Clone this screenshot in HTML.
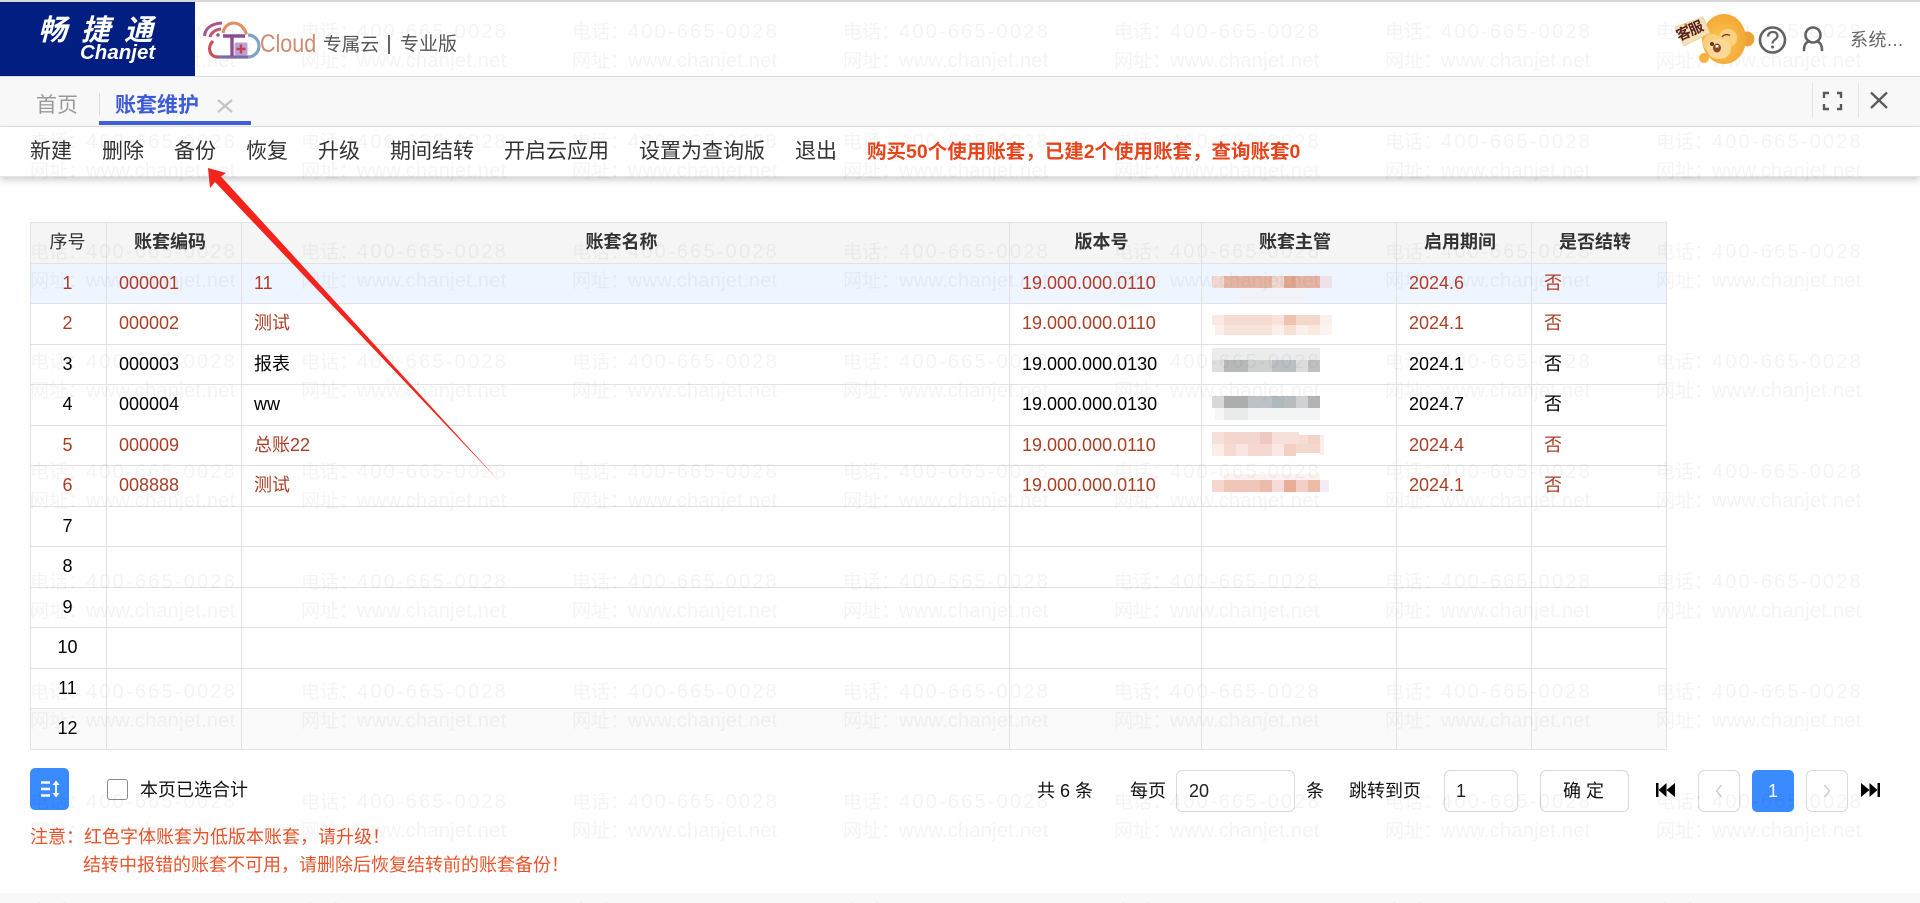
<!DOCTYPE html>
<html lang="zh">
<head>
<meta charset="utf-8">
<title>账套维护</title>
<style>
html,body{margin:0;padding:0;width:1920px;height:903px;overflow:hidden;background:#fff}
body{position:relative;font-family:"Liberation Sans","Noto Sans CJK SC",sans-serif;font-size:18px;color:#000}
.a{position:absolute}
.t{position:absolute;white-space:nowrap;line-height:24px}
#top{left:0;top:0;width:1920px;height:2px;background:#d9d9d9}
#hdline{left:0;top:76px;width:1920px;height:1px;background:#dcdcdc}
#tabs{left:0;top:77px;width:1920px;height:49px;background:#f8f8f9;border-bottom:1px solid #e6e6e6}
#bar{left:0;top:127px;width:1920px;height:49px;background:#fff;box-shadow:0 3px 7px rgba(0,0,0,.2);border-bottom:1px solid #e4e4e4}
#foot{left:0;top:893px;width:1920px;height:10px;background:#f8f8f8}
#logo{left:0;top:2px;width:195px;height:74px;background:#011e80;z-index:5;overflow:hidden}
.tb{font-size:21px;color:#333;top:140px}
table{position:absolute;left:30px;top:222px;border-collapse:separate;border-spacing:0;table-layout:fixed;width:1637px;border-left:1px solid #e2e2e2;border-top:1px solid #e2e2e2}
th,td{padding:0 0 2px 0;box-sizing:border-box;border-right:1px solid #e2e2e2;border-bottom:1px solid #e2e2e2;line-height:20px;font-size:18px;text-align:left;overflow:hidden;white-space:nowrap}
th{background:#f5f5f5;color:#333;font-weight:bold;text-align:center;padding-right:8px}
th.n{font-weight:normal;padding-right:2px}
td.n{text-align:center;padding-right:2px}
td.p{padding-left:12px}
td.v{padding-left:12px}
td.f{padding-left:12px}
tr.r td{color:#a93f25}
tr.s td{background:#eef5fe;color:#b53a2a}
tr.g td{background:#fafafa}
.h{height:40px}.l{height:41px}
.box{position:absolute;box-sizing:border-box;border:1px solid #d9d9d9;border-radius:6px;background:transparent}
.note{color:#e8532a}
#ov{position:absolute;left:0;top:0;z-index:3;pointer-events:none}
.z{z-index:6}
</style>
</head>
<body>
<div class="a" id="top"></div>
<div class="a" id="hdline"></div>
<div class="a" id="tabs"></div>
<div class="a" id="bar"></div>
<div class="a" id="foot"></div>

<div class="a" id="logo">
  <div class="t" style="left:38px;top:13px;font-size:29px;line-height:32px;font-weight:bold;color:#fff;font-style:italic;letter-spacing:14px">畅捷通</div>
  <div class="t" style="left:80px;top:39px;font-size:20.500px;font-weight:bold;font-style:italic;color:#fff">Chanjet</div>
</div>

<!-- product logo -->
<svg class="a z" style="left:200px;top:18px" width="62" height="44" viewBox="200 18 62 44" fill="none">
  <path d="M204.500 36C205 28 212 23.500 222 23" stroke="#a5568f" stroke-width="3"/>
  <path d="M210 37C211 33 215 29.500 221 29" stroke="#c2566e" stroke-width="3"/>
  <circle cx="218" cy="35" r="1.800" fill="#a5568f"/>
  <path d="M213 41C207 47 209 57 218 57" stroke="#c9505a" stroke-width="3.200"/>
  <path d="M218 57H248" stroke="#7d6ba6" stroke-width="3.200"/>
  <path d="M223 33C225 20 242 19 246.500 34.500" stroke="#e0915f" stroke-width="3.200"/>
  <path d="M248 35A11 11 0 0 1 248 57" stroke="#7fa3c4" stroke-width="3.200"/>
  <path d="M223 36H245M232 36V56" stroke="#8a4f92" stroke-width="3.400"/>
  <rect x="234.500" y="42.500" width="13" height="13" rx="2" fill="#b9a3d2"/>
  <path d="M241 44.500V53.500M236.500 49H245.500" stroke="#c73d5a" stroke-width="2.400"/>
</svg>
<div class="t z" style="left:260px;top:29px;font-size:25px;line-height:30px;color:#cf8a70;transform:scaleX(.86);transform-origin:0 0">Cloud</div>
<div class="t z" style="left:323px;top:33px;font-size:18.700px;color:#555">专属云</div>
<div class="a z" style="left:388px;top:35px;width:2px;height:19px;background:#666"></div>
<div class="t z" style="left:400px;top:33px;font-size:19px;color:#555">专业版</div>

<!-- monkey -->
<svg class="a z" style="left:1670px;top:8px" width="90" height="62" viewBox="1670 8 90 62">
  <defs>
    <radialGradient id="mk" cx="0.45" cy="0.55" r="0.7"><stop offset="0" stop-color="#fdc655"/><stop offset="1" stop-color="#f0a02c"/></radialGradient>
  </defs>
  <circle cx="1747" cy="39" r="7.500" fill="#efa234"/>
  <ellipse cx="1724" cy="39" rx="22" ry="25" fill="url(#mk)"/>
  <circle cx="1704" cy="58" r="5" fill="#f7b23c"/>
  <ellipse cx="1712" cy="43" rx="9" ry="9" fill="#fbd080"/>
  <ellipse cx="1728" cy="38" rx="9" ry="9" fill="#fbd080"/>
  <ellipse cx="1719" cy="49" rx="12" ry="10" fill="#fbd896"/>
  <circle cx="1712" cy="44" r="2" fill="#5a3522"/>
  <path d="M1722 37C1724 34.500 1727 34 1730 35.500" stroke="#6b4026" stroke-width="1.300" fill="none"/>
  <ellipse cx="1717" cy="48" rx="4" ry="4.500" fill="#8a4526"/>
  <rect x="1715.500" y="45" width="3" height="2.500" fill="#fff"/>
  <polygon points="1675,27 1703,17 1710,33 1684,46" fill="#f5e1b5" stroke="#e3c68c" stroke-width=".6"/>
  <circle cx="1686" cy="25" r="1.500" fill="#b5703a"/>
  <text x="0" y="0" transform="translate(1679 41) rotate(-24)" font-family="'Liberation Sans','Noto Sans CJK SC',sans-serif" font-size="14.500" font-weight="bold" fill="#55201a" letter-spacing="-1">客服</text>
</svg>

<!-- help / user -->
<svg class="a z" style="left:1755px;top:22px" width="75" height="36" viewBox="1755 22 75 36" fill="none">
  <circle cx="1772.500" cy="40" r="12.500" stroke="#636363" stroke-width="2.600"/>
  <path d="M1768 36.500C1768 30.500 1777.500 30.500 1777.500 36C1777.500 39.500 1772.500 39.500 1772.500 43.500" stroke="#636363" stroke-width="2.200"/>
  <circle cx="1772.500" cy="47" r="1.500" fill="#636363"/>
  <circle cx="1813" cy="35" r="7.500" stroke="#636363" stroke-width="2.600"/>
  <path d="M1804 50C1804 44 1807 41.500 1809.500 41.500M1822 50C1822 44 1819 41.500 1816.500 41.500" stroke="#636363" stroke-width="2.600" stroke-linecap="round"/>
</svg>
<div class="t z" style="left:1850px;top:28px;font-size:18px;color:#666;letter-spacing:.5px">系统...</div>

<!-- tabs -->
<div class="t" style="left:36px;top:94px;font-size:21px;color:#999">首页</div>
<div class="a" style="left:99px;top:93px;width:1px;height:22px;background:#dcdcdc"></div>
<div class="t" style="left:115px;top:94px;font-size:21px;font-weight:bold;color:#3d5bd9">账套维护</div>
<svg class="a" style="left:216px;top:98px" width="18" height="16"><path d="M2 2L16 14M16 2L2 14" stroke="#c4c4c4" stroke-width="2.200"/></svg>
<div class="a" style="left:99px;top:121px;width:152px;height:4px;background:#3e5fd8"></div>

<div class="a" style="left:1812px;top:83px;width:1px;height:35px;background:#e2e4e8"></div>
<div class="a" style="left:1858px;top:83px;width:1px;height:35px;background:#e2e4e8"></div>
<svg class="a" style="left:1821px;top:90px" width="24" height="22" fill="none"><path d="M8 3H3V8M16 3H20V8M8 19H3V14M16 19H20V14" stroke="#595959" stroke-width="2.400"/></svg>
<svg class="a" style="left:1869px;top:90px" width="20" height="20"><path d="M2 2.500L18 18M18 2.500L2 18" stroke="#5a5a5a" stroke-width="2.300"/></svg>

<!-- toolbar -->
<div class="t tb" style="left:30px">新建</div>
<div class="t tb" style="left:102px">删除</div>
<div class="t tb" style="left:174px">备份</div>
<div class="t tb" style="left:246px">恢复</div>
<div class="t tb" style="left:318px">升级</div>
<div class="t tb" style="left:390px">期间结转</div>
<div class="t tb" style="left:504px">开启云应用</div>
<div class="t tb" style="left:639px">设置为查询版</div>
<div class="t tb" style="left:795px">退出</div>
<div class="t" style="left:867px;top:140px;font-size:19.500px;font-weight:bold;color:#e8431a">购买50个使用账套，已建2个使用账套，查询账套0</div>

<!-- table -->
<table>
<colgroup><col style="width:76px"><col style="width:135px"><col style="width:768px"><col style="width:192px"><col style="width:195px"><col style="width:135px"><col style="width:135px"></colgroup>
<tr style="height:41px"><th class="n">序号</th><th>账套编码</th><th>账套名称</th><th>版本号</th><th>账套主管</th><th>启用期间</th><th>是否结转</th></tr>
<tr class="h r s"><td class="n">1</td><td class="p">000001</td><td class="p">11</td><td class="v">19.000.000.0110</td><td></td><td class="p">2024.6</td><td class="f">否</td></tr>
<tr class="l r"><td class="n">2</td><td class="p">000002</td><td class="p">测试</td><td class="v">19.000.000.0110</td><td></td><td class="p">2024.1</td><td class="f">否</td></tr>
<tr class="h"><td class="n">3</td><td class="p">000003</td><td class="p">报表</td><td class="v">19.000.000.0130</td><td></td><td class="p">2024.1</td><td class="f">否</td></tr>
<tr class="l"><td class="n">4</td><td class="p">000004</td><td class="p">ww</td><td class="v">19.000.000.0130</td><td></td><td class="p">2024.7</td><td class="f">否</td></tr>
<tr class="h r"><td class="n">5</td><td class="p">000009</td><td class="p">总账22</td><td class="v">19.000.000.0110</td><td></td><td class="p">2024.4</td><td class="f">否</td></tr>
<tr class="l r"><td class="n">6</td><td class="p">008888</td><td class="p">测试</td><td class="v">19.000.000.0110</td><td></td><td class="p">2024.1</td><td class="f">否</td></tr>
<tr class="h"><td class="n">7</td><td></td><td></td><td></td><td></td><td></td><td></td></tr>
<tr class="l"><td class="n">8</td><td></td><td></td><td></td><td></td><td></td><td></td></tr>
<tr class="h"><td class="n">9</td><td></td><td></td><td></td><td></td><td></td><td></td></tr>
<tr class="l"><td class="n">10</td><td></td><td></td><td></td><td></td><td></td><td></td></tr>
<tr class="h"><td class="n">11</td><td></td><td></td><td></td><td></td><td></td><td></td></tr>
<tr class="l g"><td class="n">12</td><td></td><td></td><td></td><td></td><td></td><td></td></tr>
</table>

<!-- bottom left -->
<div class="a" style="left:30px;top:768px;width:39px;height:42px;background:#3a8bff;border-radius:5px"></div>
<svg class="a" style="left:30px;top:768px" width="39" height="42" fill="none"><path d="M11 14.500H20M11 21H20M11 27.500H20" stroke="#fff" stroke-width="2.400"/><path d="M26 13.500V28.500" stroke="#fff" stroke-width="1.800"/><path d="M22.500 17L26 12.500L29.500 17ZM22.500 25L26 29.500L29.500 25Z" fill="#fff"/></svg>
<div class="a" style="left:107px;top:779px;width:21px;height:21px;box-sizing:border-box;border:1.500px solid #8a8a8a;border-radius:3px;background:#fff"></div>
<div class="t" style="left:140px;top:778px;color:#111">本页已选合计</div>
<div class="t note" style="left:30px;top:825px">注意：红色字体账套为低版本账套，请升级！</div>
<div class="t note" style="left:83px;top:853px">结转中报错的账套不可用，请删除后恢复结转前的账套备份！</div>

<!-- pagination -->
<div class="t" style="left:1037px;top:779px;color:#111">共 6 条</div>
<div class="t" style="left:1130px;top:779px;color:#111">每页</div>
<div class="box" style="left:1176px;top:770px;width:119px;height:42px"></div>
<div class="t" style="left:1189px;top:779px;color:#222">20</div>
<div class="t" style="left:1306px;top:779px;color:#111">条</div>
<div class="t" style="left:1349px;top:779px;color:#111">跳转到页</div>
<div class="box" style="left:1444px;top:770px;width:74px;height:42px"></div>
<div class="t" style="left:1456px;top:779px;color:#222">1</div>
<div class="box" style="left:1540px;top:770px;width:89px;height:42px"></div>
<div class="t" style="left:1563px;top:779px;color:#111">确 定</div>
<svg class="a" style="left:1654px;top:780px" width="24" height="20"><path d="M2 3H4.500V17H2ZM4.500 10L12.500 3V17ZM12.500 10L21 3V17Z" fill="#000"/></svg>
<div class="box" style="left:1698px;top:770px;width:42px;height:42px"></div>
<svg class="a" style="left:1712px;top:782px" width="14" height="18" fill="none"><path d="M9.500 3L4.500 9L9.500 15" stroke="#c8c8c8" stroke-width="1.300"/></svg>
<div class="a" style="left:1752px;top:770px;width:42px;height:42px;background:#3a8bff;border-radius:5px;color:#fff;text-align:center;line-height:42px">1</div>
<div class="box" style="left:1806px;top:770px;width:42px;height:42px"></div>
<svg class="a" style="left:1820px;top:782px" width="14" height="18" fill="none"><path d="M4.500 3L9.500 9L4.500 15" stroke="#c8c8c8" stroke-width="1.300"/></svg>
<svg class="a" style="left:1858px;top:780px" width="24" height="20"><path d="M22 3H19.500V17H22ZM19.500 10L11.500 3V17ZM11.500 10L3 3V17Z" fill="#000"/></svg>

<!-- overlay: mosaic, watermark, arrow -->
<svg id="ov" width="1920" height="903" viewBox="0 0 1920 903" xmlns="http://www.w3.org/2000/svg">
  <defs>
    <pattern id="wm" x="30" y="0" width="271" height="110" patternUnits="userSpaceOnUse">
      <text y="38" font-family="'Liberation Sans','Noto Sans CJK SC',sans-serif" font-size="19" fill="#000"><tspan x="0">电话：</tspan><tspan x="56" font-size="20" letter-spacing="2.200">400-665-0028</tspan></text>
      <text y="67" font-family="'Liberation Sans','Noto Sans CJK SC',sans-serif" font-size="19" fill="#000"><tspan x="0">网址：</tspan><tspan x="56" font-size="20" letter-spacing=".25">www.chanjet.net</tspan></text>
    </pattern>
  </defs>
  <g shape-rendering="crispEdges">
    <rect x="1212" y="276" width="12" height="12" fill="#f0d8d0"/><rect x="1224" y="276" width="48" height="12" fill="#e4b5a3"/><rect x="1272" y="276" width="12" height="12" fill="#efd6cf"/><rect x="1284" y="276" width="12" height="12" fill="#e0a790"/><rect x="1296" y="276" width="24" height="12" fill="#e5b4a3"/><rect x="1320" y="276" width="12" height="12" fill="#efe1ea"/><rect x="1237" y="288" width="68" height="12" fill="#f1f3f8"/>
    <rect x="1212" y="315" width="12" height="10" fill="#fbeae3"/><rect x="1224" y="315" width="48" height="10" fill="#f6dbd0"/><rect x="1272" y="315" width="12" height="10" fill="#f8e2da"/><rect x="1284" y="315" width="12" height="10" fill="#efc3b0"/><rect x="1296" y="315" width="24" height="10" fill="#f4d7cb"/><rect x="1320" y="315" width="12" height="10" fill="#fbf0ec"/>
    <rect x="1215" y="325" width="9" height="10" fill="#fcefe9"/><rect x="1224" y="325" width="48" height="10" fill="#f8e3da"/><rect x="1272" y="325" width="12" height="10" fill="#fcefea"/><rect x="1284" y="325" width="12" height="10" fill="#f8e0d4"/><rect x="1296" y="325" width="12" height="10" fill="#fbefe9"/><rect x="1308" y="325" width="12" height="10" fill="#fbe9df"/><rect x="1320" y="325" width="12" height="10" fill="#fdf3f0"/>
    <rect x="1212" y="348" width="108" height="12" fill="#ececec"/><rect x="1212" y="360" width="12" height="12" fill="#dedede"/><rect x="1224" y="360" width="24" height="12" fill="#b7b9b9"/><rect x="1248" y="360" width="24" height="12" fill="#cfd1d1"/><rect x="1272" y="360" width="24" height="12" fill="#b9c0c4"/><rect x="1296" y="360" width="12" height="12" fill="#dddddd"/><rect x="1308" y="360" width="12" height="12" fill="#c0c0c4"/>
    <rect x="1212" y="396" width="12" height="12" fill="#d8d8da"/><rect x="1224" y="396" width="24" height="12" fill="#aeaeae"/><rect x="1248" y="396" width="24" height="12" fill="#bdc2c6"/><rect x="1272" y="396" width="12" height="12" fill="#afbac0"/><rect x="1284" y="396" width="12" height="12" fill="#b9bcbe"/><rect x="1296" y="396" width="12" height="12" fill="#cfd1d3"/><rect x="1308" y="396" width="12" height="12" fill="#b3b3b6"/><rect x="1215" y="408" width="9" height="12" fill="#f7f7f7"/><rect x="1224" y="408" width="24" height="12" fill="#e9ebeb"/><rect x="1248" y="408" width="72" height="12" fill="#f3f4f4"/>
    <rect x="1212" y="432" width="12" height="12" fill="#f7e0da"/><rect x="1224" y="432" width="36" height="12" fill="#f3d6ce"/><rect x="1260" y="432" width="12" height="12" fill="#efc9bf"/><rect x="1272" y="432" width="27" height="12" fill="#f7e0da"/><rect x="1299" y="435" width="9" height="9" fill="#f6dcd2"/><rect x="1308" y="435" width="12" height="9" fill="#f2d3c7"/><rect x="1320" y="435" width="4" height="20" fill="#fbeeeb"/>
    <rect x="1212" y="444" width="12" height="12" fill="#fbeee9"/><rect x="1224" y="444" width="12" height="12" fill="#f5dbd2"/><rect x="1236" y="444" width="12" height="12" fill="#f9e6e2"/><rect x="1248" y="444" width="24" height="12" fill="#f5d9d0"/><rect x="1272" y="444" width="12" height="12" fill="#fae8e6"/><rect x="1284" y="444" width="12" height="12" fill="#f3d0c2"/><rect x="1296" y="444" width="24" height="9" fill="#f5d8cc"/>
    <rect x="1212" y="480" width="12" height="12" fill="#f5d7cf"/><rect x="1224" y="480" width="36" height="12" fill="#f0c6b8"/><rect x="1260" y="480" width="12" height="12" fill="#ecbbab"/><rect x="1272" y="480" width="12" height="12" fill="#f6dcd8"/><rect x="1284" y="480" width="12" height="12" fill="#e7ad97"/><rect x="1296" y="480" width="12" height="12" fill="#f2d0c6"/><rect x="1308" y="480" width="12" height="12" fill="#eebba4"/><rect x="1320" y="480" width="9" height="12" fill="#f4ecf4"/><rect x="1224" y="474" width="96" height="6" fill="#fcf3ef"/>
  </g>
  <rect x="0" y="0" width="1920" height="903" fill="url(#wm)" opacity=".045"/>
  <polygon points="208,168 226,173 221,176.500 500,482 215,182 210,188" fill="#f4241c"/>
</svg>
</body>
</html>
